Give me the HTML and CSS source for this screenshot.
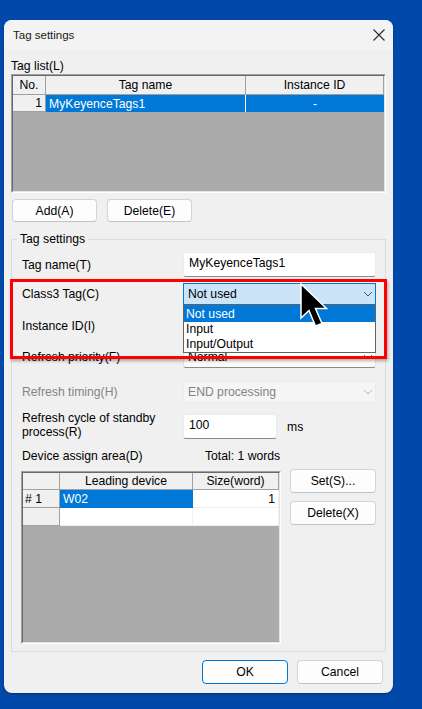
FILE: index.html
```html
<!DOCTYPE html>
<html>
<head>
<meta charset="utf-8">
<title>Tag settings</title>
<link rel="stylesheet" href="styles.css">
</head>
<body>
<div class="window">
  <div class="titlebar">
    <span class="title">Tag settings</span>
    <svg class="close" width="12" height="12" viewBox="0 0 12 12"><path d="M0.5 0.5 L11.5 11.5 M11.5 0.5 L0.5 11.5" stroke="#2b2b2b" stroke-width="1.1" fill="none"/></svg>
  </div>
  <div class="content">
    <div class="label-line">Tag list(L)</div>
    <div class="grid tag-grid">
      <div class="grid-inner">
        <div class="row head">
          <div class="cell t-no">No.</div>
          <div class="cell t-name">Tag name</div>
          <div class="cell t-id">Instance ID</div>
        </div>
        <div class="row data">
          <div class="cell t-no rowhead num">1</div>
          <div class="cell t-name sel sep left">MyKeyenceTags1</div>
          <div class="cell t-id sel">-</div>
        </div>
      </div>
    </div>
    <div class="btn-row">
      <button class="btn">Add(A)</button>
      <button class="btn">Delete(E)</button>
    </div>
    <fieldset class="group">
      <legend>Tag settings</legend>
      <div class="field f-tagname">
        <span class="lbl">Tag name(T)</span>
        <div class="textbox wide">MyKeyenceTags1</div>
      </div>
      <div class="field f-class3">
        <span class="lbl">Class3 Tag(C)</span>
        <div class="combo focused">
          <span>Not used</span>
          <svg class="chev" width="10" height="6" viewBox="0 0 10 6"><path d="M1 1 L5 5 L9 1" fill="none" stroke="#5a5a5a" stroke-width="1"/></svg>
          <ul class="dropdown">
            <li class="hl">Not used</li>
            <li>Input</li>
            <li>Input/Output</li>
          </ul>
        </div>
      </div>
      <div class="field f-instance">
        <span class="lbl">Instance ID(I)</span>
        <div class="textbox wide"></div>
      </div>
      <div class="field f-priority">
        <span class="lbl">Refresh priority(F)</span>
        <div class="combo">
          <span>Normal</span>
          <svg class="chev" width="10" height="6" viewBox="0 0 10 6"><path d="M1 1 L5 5 L9 1" fill="none" stroke="#5a5a5a" stroke-width="1"/></svg>
        </div>
      </div>
      <div class="field f-timing">
        <span class="lbl disabled">Refresh timing(H)</span>
        <div class="combo off">
          <span>END processing</span>
          <svg class="chev" width="10" height="6" viewBox="0 0 10 6"><path d="M1 1 L5 5 L9 1" fill="none" stroke="#b4b4b4" stroke-width="1"/></svg>
        </div>
      </div>
      <div class="field f-cycle">
        <span class="lbl two">Refresh cycle of standby<br>process(R)</span>
        <div class="textbox short">100</div>
        <span class="unit">ms</span>
      </div>
      <div class="field f-area">
        <span class="lbl area">Device assign area(D)</span>
        <span class="total">Total: 1 words</span>
      </div>
      <div class="device">
        <div class="grid dev-grid">
          <div class="grid-inner">
            <div class="row head dhead">
              <div class="cell d-no"></div>
              <div class="cell d-dev">Leading device</div>
              <div class="cell d-size">Size(word)</div>
            </div>
            <div class="row drow">
              <div class="cell d-no rowhead left">#&nbsp;1</div>
              <div class="cell d-dev sel left">W02</div>
              <div class="cell d-size white num">1</div>
            </div>
            <div class="row drow">
              <div class="cell d-no rowhead"></div>
              <div class="cell d-dev white"></div>
              <div class="cell d-size white"></div>
            </div>
          </div>
        </div>
        <div class="side-btns">
          <button class="btn side">Set(S)...</button>
          <button class="btn side">Delete(X)</button>
        </div>
      </div>
    </fieldset>
    <div class="footer">
      <button class="btn foot default">OK</button>
      <button class="btn foot">Cancel</button>
    </div>
  </div>
  <div class="highlight"></div>
  <svg class="cursor" width="32" height="48" viewBox="0 0 32 48"><path d="M2 2 L2 36 L10 28.5 L16.5 44 L23 41.5 L16.5 26.5 L27.5 26.5 Z" fill="#000" stroke="#fff" stroke-width="1.5" stroke-linejoin="miter"/></svg>
</div>
</body>
</html>
```

FILE: styles.css
```css
* { box-sizing: border-box; }
html, body { margin: 0; padding: 0; }
body {
  background: #0049ab;
  width: 422px;
  height: 709px;
  overflow: hidden;
  font-family: "Liberation Sans", Arial, sans-serif;
  font-size: 12.2px;
  color: #000;
}
.window {
  position: relative;
  margin: 20px 0 0 4px;
  width: 389px;
  height: 673px;
  background: #f0f0f0;
  border-radius: 8px;
  box-shadow: 0 1px 2px rgba(0, 0, 0, 0.35);
}
.titlebar {
  height: 30px;
  background: #f3f3f3;
  border-radius: 8px 8px 0 0;
  display: flex;
  align-items: center;
  justify-content: space-between;
  padding: 0 8px 0 9px;
}
.title { font-size: 11.5px; color: #1a1a1a; }
.close { display: block; }
.content {
  display: flex;
  flex-direction: column;
  padding: 0 7px;
}
.label-line {
  margin-top: 9px;
  height: 14px;
  line-height: 14px;
  margin-bottom: 1px;
}
.grid {
  border: 1px solid;
  border-color: #a0a0a0 #ffffff #ffffff #a0a0a0;
}
.grid-inner {
  height: 100%;
  background: #ababab;
  border: 1px solid;
  border-color: #696969 #e3e3e3 #e3e3e3 #696969;
}
.tag-grid { height: 119px; width: 375px; }
.row { display: flex; }
.cell {
  display: flex;
  align-items: center;
  justify-content: center;
  white-space: nowrap;
  overflow: hidden;
}
.head .cell {
  background: #f0f0f0;
  border-right: 1px solid #a0a0a0;
  border-bottom: 1px solid #a0a0a0;
  height: 19px;
}
.t-no { width: 33px; }
.t-name { width: 200px; }
.t-id { width: 138px; }
.data .cell { height: 17px; }
.rowhead {
  background: #f0f0f0;
  border-right: 1px solid #a0a0a0;
  border-bottom: 1px solid #a0a0a0;
}
.num { justify-content: flex-end; padding-right: 3px; }
.left { justify-content: flex-start; padding-left: 3px; }
.sel { background: #0078d7; color: #fff; }
.sep { border-right: 1px solid #ffffff; }
.btn-row {
  display: flex;
  gap: 10px;
  margin-top: 6px;
  padding-left: 1px;
}
.btn {
  font-family: inherit;
  font-size: 12.2px;
  color: #000;
  background: #fdfdfd;
  border: 1px solid #d3d3d3;
  border-bottom-color: #c2c2c2;
  border-radius: 4px;
  padding: 0;
  width: 85px;
  height: 23px;
}
.group {
  margin: 10px 0 0 0;
  padding: 0 9px 7px 0;
  border: 1px solid #dcdcdc;
  min-width: 0;
  width: 375px;
}
.group legend {
  margin-left: 5px;
  padding: 0 3px;
  line-height: 14px;
  height: 14px;
}
.field {
  display: flex;
  align-items: center;
}
.lbl {
  flex: none;
  width: 171px;
  padding-left: 10px;
  line-height: 14px;
}
.lbl.disabled { color: #848484; }
.textbox {
  height: 25px;
  background: #fff;
  border: 1px solid #ebebeb;
  border-bottom-color: #8a8a8a;
  border-radius: 3px;
  padding: 0 0 3px 5px;
  display: flex;
  align-items: center;
}
.textbox.wide { width: 193px; }
.textbox.short { width: 94px; }
.combo {
  position: relative;
  width: 193px;
  height: 22px;
  display: flex;
  align-items: center;
  justify-content: space-between;
  padding: 0 2px 0 4px;
  background: #fdfdfd;
  border: 1px solid #e3e3e3;
  border-bottom-color: #8a8a8a;
  border-radius: 3px;
}
.combo.focused {
  background: #cce4f7;
  border: 1px solid #0078d7;
  border-radius: 0;
}
.combo.off {
  background: #f5f5f5;
  border: 1px solid #ebebeb;
  color: #848484;
}
.chev { display: block; }
.dropdown {
  position: absolute;
  left: -1px;
  top: 21px;
  width: 193px;
  height: 48px;
  margin: 0;
  padding: 0;
  list-style: none;
  background: #fff;
  border: 1px solid #646464;
  z-index: 3;
}
.dropdown li {
  height: 15px;
  line-height: 15px;
  padding-left: 2px;
}
.dropdown li.hl {
  height: 16px;
  line-height: 16px;
  background: #0078d7;
  color: #fff;
}
.f-tagname { margin-top: 6px; }
.f-class3 { margin-top: 6px; }
.f-instance { margin-top: 8px; }
.f-priority { margin-top: 8px; }
.f-timing { margin-top: 13px; }
.f-cycle { margin-top: 8px; align-items: flex-end; }
.unit { margin-left: 10px; align-self: center; padding-top: 4px; }
.f-area { margin-top: 10px; line-height: 14px; }
.lbl.area { width: 193px; }
.device {
  display: flex;
  align-items: flex-start;
  margin-top: 6px;
  padding-left: 9px;
}
.dev-grid {
  margin-top: 2px;
  width: 260px;
  height: 173px;
}
.dhead .cell { height: 17px; }
.d-no { width: 37px; }
.d-dev { width: 133px; }
.d-size { width: 86px; }
.drow .cell { height: 18px; }
.drow .rowhead.left { padding-left: 2px; }
.white {
  background: #fff;
  border-right: 1px solid #f0f0f0;
  border-bottom: 1px solid #f0f0f0;
}
.drow .sel { border-bottom: 1px solid #0078d7; }
.side-btns {
  display: flex;
  flex-direction: column;
  gap: 8px;
  margin-left: 9px;
}
.btn.side { width: 86px; height: 24px; }
.footer {
  display: flex;
  justify-content: flex-end;
  gap: 9px;
  margin-top: 8px;
  padding-right: 3px;
}
.btn.foot { width: 86px; height: 24px; }
.btn.default { border: 1px solid #0078d7; }
.highlight {
  position: absolute;
  left: 6px;
  top: 259px;
  width: 377px;
  height: 80px;
  border: 3px solid #ff0000;
  box-shadow: 1px 2px 3px rgba(0, 0, 0, 0.3);
  z-index: 5;
  pointer-events: none;
}
.cursor {
  position: absolute;
  left: 295px;
  top: 262px;
  z-index: 6;
}
```
